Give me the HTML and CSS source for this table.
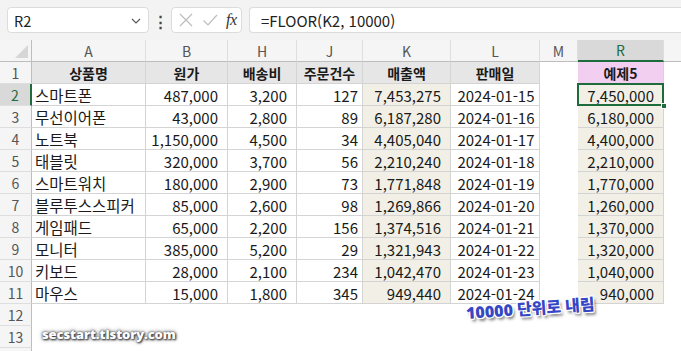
FILE: index.html
```html
<!DOCTYPE html>
<html lang="ko">
<head>
<meta charset="utf-8">
<link rel="stylesheet" href="styles.css">
</head>
<body>
<div class="app">
  <div class="fbar">
    <div class="namebox"><span>R2</span>
      <svg class="chev" width="10" height="6" viewBox="0 0 10 6"><path d="M1 1 L5 5 L9 1" fill="none" stroke="#555" stroke-width="1.1"/></svg>
    </div>
    <div class="dots">⋮</div>
    <div class="fxbox">
      <svg width="16" height="16" viewBox="0 0 16 16"><path d="M2 2 L14 14 M14 2 L2 14" stroke="#bdbdbd" stroke-width="1.2"/></svg>
      <svg width="16" height="16" viewBox="0 0 16 16"><path d="M1.5 8.5 L6 13 L15 3" fill="none" stroke="#bdbdbd" stroke-width="1.2"/></svg>
      <span class="fx">fx</span>
    </div>
    <div class="formula">=FLOOR(K2, 10000)</div>
  </div>

  <div class="sheet">
    <div class="row colhdr">
      <div class="c corner"><span class="tri"></span></div>
      <div class="c">A</div><div class="c">B</div><div class="c">H</div><div class="c">J</div>
      <div class="c">K</div><div class="c">L</div><div class="c">M</div><div class="c sel">R</div><div class="c last"></div>
    </div>

    <div class="row">
      <div class="c rh">1</div>
      <div class="c t th">상품명</div><div class="c t th">원가</div><div class="c t th">배송비</div><div class="c t th">주문건수</div>
      <div class="c t th">매출액</div><div class="c t th">판매일</div><div class="c e"></div><div class="c t th pink">예제5</div><div class="c e"></div>
    </div>
    <div class="row">
      <div class="c rh rsel">2</div>
      <div class="c t name">스마트폰</div><div class="c t num">487,000</div><div class="c t num">3,200</div><div class="c t cnt">127</div>
      <div class="c t num bg">7,453,275</div><div class="c t date">2024-01-15</div><div class="c e"></div><div class="c t num bg active">7,450,000<span class="handle"></span></div><div class="c e"></div>
    </div>
    <div class="row">
      <div class="c rh">3</div>
      <div class="c t name">무선이어폰</div><div class="c t num">43,000</div><div class="c t num">2,800</div><div class="c t cnt">89</div>
      <div class="c t num bg">6,187,280</div><div class="c t date">2024-01-16</div><div class="c e"></div><div class="c t num bg">6,180,000</div><div class="c e"></div>
    </div>
    <div class="row">
      <div class="c rh">4</div>
      <div class="c t name">노트북</div><div class="c t num">1,150,000</div><div class="c t num">4,500</div><div class="c t cnt">34</div>
      <div class="c t num bg">4,405,040</div><div class="c t date">2024-01-17</div><div class="c e"></div><div class="c t num bg">4,400,000</div><div class="c e"></div>
    </div>
    <div class="row">
      <div class="c rh">5</div>
      <div class="c t name">태블릿</div><div class="c t num">320,000</div><div class="c t num">3,700</div><div class="c t cnt">56</div>
      <div class="c t num bg">2,210,240</div><div class="c t date">2024-01-18</div><div class="c e"></div><div class="c t num bg">2,210,000</div><div class="c e"></div>
    </div>
    <div class="row">
      <div class="c rh">6</div>
      <div class="c t name">스마트워치</div><div class="c t num">180,000</div><div class="c t num">2,900</div><div class="c t cnt">73</div>
      <div class="c t num bg">1,771,848</div><div class="c t date">2024-01-19</div><div class="c e"></div><div class="c t num bg">1,770,000</div><div class="c e"></div>
    </div>
    <div class="row">
      <div class="c rh">7</div>
      <div class="c t name">블루투스스피커</div><div class="c t num">85,000</div><div class="c t num">2,600</div><div class="c t cnt">98</div>
      <div class="c t num bg">1,269,866</div><div class="c t date">2024-01-20</div><div class="c e"></div><div class="c t num bg">1,260,000</div><div class="c e"></div>
    </div>
    <div class="row">
      <div class="c rh">8</div>
      <div class="c t name">게임패드</div><div class="c t num">65,000</div><div class="c t num">2,200</div><div class="c t cnt">156</div>
      <div class="c t num bg">1,374,516</div><div class="c t date">2024-01-21</div><div class="c e"></div><div class="c t num bg">1,370,000</div><div class="c e"></div>
    </div>
    <div class="row">
      <div class="c rh">9</div>
      <div class="c t name">모니터</div><div class="c t num">385,000</div><div class="c t num">5,200</div><div class="c t cnt">29</div>
      <div class="c t num bg">1,321,943</div><div class="c t date">2024-01-22</div><div class="c e"></div><div class="c t num bg">1,320,000</div><div class="c e"></div>
    </div>
    <div class="row">
      <div class="c rh">10</div>
      <div class="c t name">키보드</div><div class="c t num">28,000</div><div class="c t num">2,100</div><div class="c t cnt">234</div>
      <div class="c t num bg">1,042,470</div><div class="c t date">2024-01-23</div><div class="c e"></div><div class="c t num bg">1,040,000</div><div class="c e"></div>
    </div>
    <div class="row">
      <div class="c rh">11</div>
      <div class="c t name">마우스</div><div class="c t num">15,000</div><div class="c t num">1,800</div><div class="c t cnt">345</div>
      <div class="c t num bg">949,440</div><div class="c t date">2024-01-24</div><div class="c e"></div><div class="c t num bg">940,000</div><div class="c e"></div>
    </div>
    <div class="row blank"><div class="c rh">12</div><div class="c fill"></div></div>
    <div class="row blank"><div class="c rh">13</div><div class="c fill"></div></div>
    <div class="row blank"><div class="c rh"></div><div class="c fill"></div></div>

    <div class="note">10000 단위로 내림</div>
    <div class="wm">secstart.tistory.com</div>
  </div>
</div>
</body>
</html>
```

FILE: styles.css
```css
* { box-sizing: border-box; }
html, body { margin: 0; padding: 0; }
body {
  width: 681px; height: 351px; overflow: hidden;
  background: #fff;
  font-family: "Noto Sans CJK KR", "Noto Sans", sans-serif;
  color: #1a1a1a;
}
.app { width: 681px; height: 351px; overflow: hidden; }

.fbar {
  height: 40px;
  background: #f3f3f3;
  display: flex;
  align-items: center;
  padding: 0 0 0 7px;
}
.namebox {
  width: 142px; height: 26px;
  background: #fff;
  border: 1px solid #dcdcdc;
  border-radius: 4px;
  display: flex; align-items: center; justify-content: space-between;
  padding: 0 7px 0 6px;
  font-size: 14.5px;
  color: #222;
}
.chev { margin-top: 1px; }
.dots {
  width: 22px; text-align: center;
  font-size: 15px; color: #444; font-weight: bold;
}
.fxbox {
  width: 71px; height: 26px;
  background: #fff;
  border: 1px solid #dcdcdc;
  border-radius: 4px;
  display: flex; align-items: center; gap: 8px;
  padding: 0 0 0 6px;
}
.fx {
  font-family: "Liberation Serif", serif;
  font-style: italic; font-size: 16px; color: #333;
  letter-spacing: -0.5px;
}
.formula {
  flex: 1; height: 26px; margin-left: 7px;
  background: #fff;
  border: 1px solid #dcdcdc; border-right: none;
  border-radius: 4px 0 0 4px;
  display: flex; align-items: center;
  padding-left: 11px;
  font-size: 15px; color: #222;
}

.sheet { position: relative; }
.row {
  display: grid;
  grid-template-columns: 32px 114px 82px 69px 66px 88px 89px 38px 86px 17px;
  height: 22px;
}
.row.blank { grid-template-columns: 32px 1fr; }
.c {
  height: 22px;
  display: flex; align-items: center;
  font-size: 15px;
  white-space: nowrap;
  overflow: visible;
  position: relative;
  padding-top: 1px;
}

.colhdr .c {
  background: #f5f5f5;
  border-right: 1px solid #dedede;
  border-bottom: 1px solid #bdbdbd;
  justify-content: center;
  font-size: 14px;
  color: #555;
  padding-top: 0;
}
.colhdr .c.corner { border-right: 1px solid #bdbdbd; }
.colhdr .c.sel {
  background: #d9d9d9;
  color: #1e6b3c;
  border-bottom: 2px solid #1e6b3c;
}
.colhdr .c.last { border-right: none; }
.tri {
  position: absolute; right: 3px; bottom: 3px;
  width: 0; height: 0;
  border-left: 13px solid transparent;
  border-bottom: 13px solid #d6d6d6;
}

.rh {
  background: #f5f5f5;
  border-right: 1px solid #bdbdbd;
  border-bottom: 1px solid #dedede;
  justify-content: center;
  font-size: 14px;
  color: #555;
}
.rh.rsel {
  background: #d9d9d9;
  color: #1e6b3c;
  border-right: 2px solid #1e6b3c;
}

.t {
  border-right: 1px solid #d4d4d4;
  border-bottom: 1px solid #d4d4d4;
}
.th {
  background: #e7e6e6;
  font-weight: bold;
  justify-content: center;
  font-size: 14px;
}
.th.pink { background: #f2cef0; }
.name { padding-left: 3px; font-size: 15.5px; }
.num { justify-content: flex-end; padding-right: 9px; font-variant-numeric: proportional-nums; }
.cnt { justify-content: flex-end; padding-right: 4px; font-variant-numeric: proportional-nums; }
.date { justify-content: center; padding-left: 2px; }
.bg { background: #f2f0e6; }

.active { border-color: #1e6b3c; }
.active::before {
  content: ""; position: absolute; left: -1px; top: -1px; right: -1px; bottom: -1px;
  border: 2px solid #1e6b3c;
}
.handle {
  position: absolute; right: -4px; bottom: -4px;
  width: 6px; height: 6px;
  background: #1e6b3c;
  border: 1px solid #fff;
  z-index: 2;
}

.note {
  position: absolute;
  left: 466px; top: 260px;
  font-family: "Open Sans", "Noto Sans CJK KR", sans-serif;
  font-weight: 800;
  font-size: 16px;
  color: #3547c4;
  transform: rotate(-4deg);
  transform-origin: left center;
  text-shadow:
    -1px -1px 0 #fff, 1px -1px 0 #fff, -1px 1px 0 #fff, 1px 1px 0 #fff,
    0 -1px 0 #fff, 0 1px 0 #fff, -1px 0 0 #fff, 1px 0 0 #fff,
    2px 3px 3px rgba(0,0,0,0.55);
  white-space: nowrap;
}
.wm {
  position: absolute;
  left: 42px; top: 285px;
  font-family: "Open Sans", "DejaVu Sans", sans-serif;
  font-weight: 800;
  font-size: 13px;
  letter-spacing: -0.1px;
  color: #fff;
  text-shadow: 0 0 2px #444, 1px 1px 2px #333, 0 0 4px #555;
  white-space: nowrap;
}
```
